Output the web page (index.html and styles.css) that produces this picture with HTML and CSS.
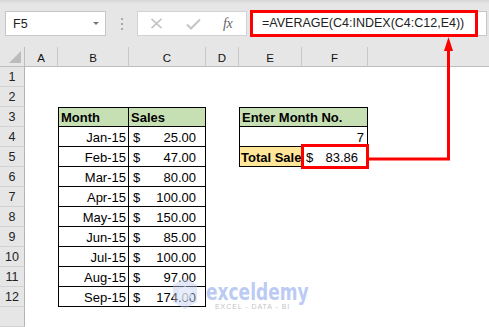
FILE: index.html
```html
<!DOCTYPE html>
<html>
<head>
<meta charset="utf-8">
<link rel="stylesheet" href="styles.css">
</head>
<body>
<div class="page">
  <div class="toolbar">
    <div class="namebox"><span class="nb-text">F5</span><span class="nb-caret"></span></div>
    <div class="grip"><i></i><i></i><i></i></div>
    <div class="fxbox">
      <svg class="ico" width="13" height="11" viewBox="0 0 13 11"><path d="M1.5 0.8 L11.5 10.2 M11.5 0.8 L1.5 10.2" stroke="#c4c4c4" stroke-width="1.6" fill="none"/></svg>
      <svg class="ico" width="15" height="12" viewBox="0 0 15 12"><path d="M1 6.5 L5 10.5 L14 1.5" stroke="#c4c4c4" stroke-width="2" fill="none"/></svg>
      <span class="fx">fx</span>
    </div>
    <div class="formula">
      <div class="formula-hl">=AVERAGE(C4:INDEX(C4:C12,E4))</div>
    </div>
  </div>

  <div class="sheet">
    <!-- column headers -->
    <div class="ch corner"><span class="tri"></span></div>
    <div class="ch">A</div><div class="ch">B</div><div class="ch">C</div><div class="ch">D</div><div class="ch">E</div><div class="ch">F</div><div class="ch last"></div>

    <!-- row 1 -->
    <div class="rh">1</div><div class="c"></div><div class="c"></div><div class="c"></div><div class="c"></div><div class="c"></div><div class="c"></div><div class="c"></div>
    <!-- row 2 -->
    <div class="rh">2</div><div class="c"></div><div class="c"></div><div class="c"></div><div class="c"></div><div class="c"></div><div class="c"></div><div class="c"></div>
    <!-- row 3 -->
    <div class="rh">3</div><div class="c"></div>
    <div class="c t tl tt hd">Month</div><div class="c t tt hd">Sales</div>
    <div class="c"></div>
    <div class="c t tl tt hd span2">Enter Month No.</div>
    <div class="c"></div>
    <!-- row 4 -->
    <div class="rh">4</div><div class="c"></div>
    <div class="c t tl r">Jan-15</div><div class="c t acc"><span>$</span><span>25.00</span></div>
    <div class="c"></div>
    <div class="c t tl r span2 pr3">7</div>
    <div class="c"></div>
    <!-- row 5 -->
    <div class="rh">5</div><div class="c"></div>
    <div class="c t tl r">Feb-15</div><div class="c t acc"><span>$</span><span>47.00</span></div>
    <div class="c"></div>
    <div class="c t tl ts">Total Sale</div>
    <div class="c t acc sel"><span>$</span><span>83.86</span></div>
    <div class="c"></div>
    <!-- row 6 -->
    <div class="rh">6</div><div class="c"></div>
    <div class="c t tl r">Mar-15</div><div class="c t acc"><span>$</span><span>80.00</span></div>
    <div class="c"></div><div class="c"></div><div class="c"></div><div class="c"></div>
    <!-- row 7 -->
    <div class="rh">7</div><div class="c"></div>
    <div class="c t tl r">Apr-15</div><div class="c t acc"><span>$</span><span>100.00</span></div>
    <div class="c"></div><div class="c"></div><div class="c"></div><div class="c"></div>
    <!-- row 8 -->
    <div class="rh">8</div><div class="c"></div>
    <div class="c t tl r">May-15</div><div class="c t acc"><span>$</span><span>150.00</span></div>
    <div class="c"></div><div class="c"></div><div class="c"></div><div class="c"></div>
    <!-- row 9 -->
    <div class="rh">9</div><div class="c"></div>
    <div class="c t tl r">Jun-15</div><div class="c t acc"><span>$</span><span>85.00</span></div>
    <div class="c"></div><div class="c"></div><div class="c"></div><div class="c"></div>
    <!-- row 10 -->
    <div class="rh">10</div><div class="c"></div>
    <div class="c t tl r">Jul-15</div><div class="c t acc"><span>$</span><span>100.00</span></div>
    <div class="c"></div><div class="c"></div><div class="c"></div><div class="c"></div>
    <!-- row 11 -->
    <div class="rh">11</div><div class="c"></div>
    <div class="c t tl r">Aug-15</div><div class="c t acc"><span>$</span><span>97.00</span></div>
    <div class="c"></div><div class="c"></div><div class="c"></div><div class="c"></div>
    <!-- row 12 -->
    <div class="rh">12</div><div class="c"></div>
    <div class="c t tl r">Sep-15</div><div class="c t acc"><span>$</span><span>174.00</span></div>
    <div class="c"></div><div class="c"></div><div class="c"></div><div class="c"></div>
    <!-- row 13 -->
    <div class="rh"></div><div class="c"></div><div class="c"></div><div class="c"></div><div class="c"></div><div class="c"></div><div class="c"></div><div class="c"></div>
  </div>

  <svg class="arrow" width="489" height="327" viewBox="0 0 489 327">
    <path d="M369 159 H448.5 V49" stroke="#ff0000" stroke-width="3" fill="none"/>
    <polygon points="448.5,37 444,51 453,51" fill="#ff0000"/>
  </svg>

  <div class="watermark">
    <svg class="wm-icon" width="26" height="33" viewBox="0 0 26 33">
      <path d="M13 1 L25 8 V25 L13 32 L1 25 V8 Z" fill="rgba(190,204,240,0.45)"/>
      <path d="M13 9 L19.5 13 V20.5 L13 24.5 L6.5 20.5 V13 Z" fill="rgba(235,240,252,0.6)"/>
    </svg>
    <div class="wm-text">
      <div class="wm-name">exceldemy</div>
      <div class="wm-sub">EXCEL - DATA - BI</div>
    </div>
  </div>
</div>
</body>
</html>
```

FILE: styles.css
```css
* { box-sizing: border-box; }
html, body { margin: 0; padding: 0; }
body {
  width: 489px;
  height: 327px;
  overflow: hidden;
  background: #fff;
  font-family: "Liberation Sans", Arial, sans-serif;
}
.page {
  position: relative;
  width: 489px;
  height: 327px;
}

/* toolbar */
.toolbar {
  height: 47px;
  background: linear-gradient(#d8d8d8 0, #e6e6e6 4px, #e6e6e6 100%);
  display: flex;
  align-items: flex-start;
  padding: 11px 2px 0 5px;
}
.namebox {
  width: 101px;
  height: 25px;
  background: #fff;
  border: 1px solid #c6c6c6;
  display: flex;
  align-items: center;
  justify-content: space-between;
  padding: 0 6px 0 7px;
  font-size: 12.5px;
  color: #222;
}
.nb-caret {
  width: 0;
  height: 0;
  border-left: 3.5px solid transparent;
  border-right: 3.5px solid transparent;
  border-top: 3.5px solid #777;
}
.grip {
  width: 31px;
  height: 25px;
  display: flex;
  flex-direction: column;
  align-items: center;
  justify-content: center;
  gap: 3px;
}
.grip i {
  display: block;
  width: 2px;
  height: 2px;
  background: #a8a8a8;
}
.fxbox {
  width: 110px;
  height: 25px;
  background: #fff;
  border: 1px solid #d2d2d2;
  display: flex;
  align-items: center;
  padding: 0 0 0 12px;
}
.fxbox .ico:first-child { margin-right: 23px; }
.fxbox .ico:nth-child(2) { margin-right: 22px; }
.fx {
  font-family: "Liberation Serif", "Times New Roman", serif;
  font-style: italic;
  font-size: 14px;
  color: #666;
  letter-spacing: -0.5px;
}
.formula {
  flex: 1;
  margin-left: 3px;
  height: 25px;
  background: #fff;
  border: 1px solid #c6c6c6;
  display: flex;
}
.formula-hl {
  width: 228px;
  height: 27px;
  margin: -2px 0 0 -1px;
  border: 3px solid #ff0000;
  padding: 2px 0 0 9px;
  font-size: 12.5px;
  line-height: 16px;
  color: #222;
  white-space: nowrap;
}

/* sheet */
.sheet {
  display: grid;
  grid-template-columns: 25px 33px 71px 77px 33px 63px 66px 1fr;
  grid-auto-rows: 20px;
}
.ch {
  background: #e6e6e6;
  border-right: 1px solid #c8c8c8;
  border-bottom: 1px solid #bdbdbd;
  font-size: 11.5px;
  color: #111;
  display: flex;
  align-items: center;
  justify-content: center;
  padding-top: 2px;
}
.ch.last { border-right: none; }
.corner {
  position: relative;
  border-right: 1px solid #bdbdbd;
}
.tri {
  position: absolute;
  right: 3px;
  bottom: 3px;
  width: 0;
  height: 0;
  border-left: 12px solid transparent;
  border-bottom: 12px solid #bcbcbc;
}
.rh {
  background: #e6e6e6;
  border-right: 1px solid #b4b4b4;
  border-bottom: 1px solid #d2d2d2;
  font-size: 12.5px;
  color: #222;
  display: flex;
  align-items: center;
  justify-content: center;
  padding-top: 1px;
}
.c {
  background: #fff;
  font-size: 13px;
  color: #000;
  display: flex;
  align-items: flex-end;
  line-height: 15px;
  padding: 0 2px 1px 2px;
  white-space: nowrap;
  overflow: visible;
}
.t {
  border-right: 1px solid #000;
  border-bottom: 1px solid #000;
}
.tl { border-left: 1px solid #000; }
.tt { border-top: 1px solid #000; }
.hd {
  background: #c6e0b4;
  font-weight: bold;
}
.ts {
  background: #ffe699;
  font-weight: bold;
  overflow: hidden;
  padding-left: 1px;
}
.r { justify-content: flex-end; }
.pr3 { padding-right: 3px; }
.span2 { grid-column: span 2; }
.acc {
  justify-content: space-between;
  padding-left: 4px;
  padding-right: 9px;
}
.sel { position: relative; }
.sel::after {
  content: "";
  position: absolute;
  left: -1px;
  top: -3px;
  right: -2px;
  bottom: -3px;
  border: 3px solid #ff0000;
}

/* annotation arrow */
.arrow {
  position: absolute;
  left: 0;
  top: 0;
  pointer-events: none;
}

/* watermark */
.watermark {
  position: absolute;
  left: 172px;
  top: 277px;
  display: flex;
  align-items: flex-start;
  gap: 8px;
}
.wm-text {
  margin-top: 5px;
  width: 110px;
}
.wm-name {
  font-family: "DejaVu Sans", "Liberation Sans", sans-serif;
  font-weight: bold;
  font-size: 23px;
  line-height: 21px;
  color: #bccbf4;
  transform: scaleX(0.74);
  transform-origin: left center;
  white-space: nowrap;
}
.wm-sub {
  font-family: "Liberation Sans", Arial, sans-serif;
  font-size: 7px;
  line-height: 8px;
  letter-spacing: 0.95px;
  color: #c4c4c4;
  padding-left: 9px;
  white-space: nowrap;
}
```
